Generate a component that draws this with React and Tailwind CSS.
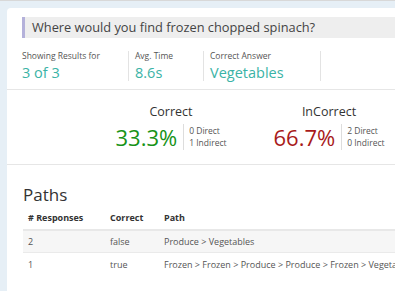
import React from "react";

const font = { fontFamily: '"Open Sans", "Noto Sans", sans-serif' };

function Stat({ label, value, w }) {
  return (
    <div className={`flex flex-col border-r border-[#e3e3e3] h-[30px] justify-between ${w}`}>
      <div className="text-[8.5px] leading-[10px] text-[#555] mt-[0px]">{label}</div>
      <div className="text-[14.5px] leading-[17px] text-[#3ab3a6]">{value}</div>
    </div>
  );
}

function Score({ title, pct, color, direct, indirect }) {
  return (
    <div className="w-[158px] flex flex-col items-center">
      <div className="text-[12.5px] leading-[16px] text-[#333]">{title}</div>
      <div className="flex items-center mt-[4px]">
        <div className={`text-[22px] leading-[26px] ${color} pr-[6px] border-r border-[#ddd] h-[26px] flex items-center`}>{pct}</div>
        <div className="pl-[5px] flex flex-col text-[8.5px] leading-[12px] text-[#555]">
          <div>{direct}</div>
          <div>{indirect}</div>
        </div>
      </div>
    </div>
  );
}

export default function App() {
  return (
    <div style={font} className="w-[395px] h-[291px] overflow-hidden bg-[#e6eff6] border-t border-[#d8d8d8]">
      <div className="ml-[7px] mt-[7px] w-[420px] h-[300px] bg-white rounded-tl-[4px]">
        <div className="pl-[15px] pt-[9px]">
          <div className="h-[21px] bg-[#eeeeee] border-l-[3px] border-[#b4b1da] pl-[7px] flex items-center text-[12.8px] text-[#444] whitespace-nowrap">
            Where would you find frozen chopped spinach?
          </div>
          <div className="flex mt-[13px] gap-[6px]">
            <Stat label="Showing Results for" value="3 of 3" w="w-[107px]" />
            <Stat label="Avg. Time" value="8.6s" w="w-[69px]" />
            <Stat label="Correct Answer" value="Vegetables" w="w-[111px]" />
          </div>
        </div>
        <div className="mt-[8px] border-t border-[#e6e6e6]" />
        <div className="flex pl-[85px] pt-[14px] h-[74px]">
          <Score title="Correct" pct="33.3%" color="text-[#179317]" direct="0 Direct" indirect="1 Indirect" />
          <Score title="InCorrect" pct="66.7%" color="text-[#a81a1a]" direct="2 Direct" indirect="0 Indirect" />
        </div>
        <div className="border-t border-[#e6e6e6]" />
        <div className="pl-[16px] pt-[20px]">
          <div className="text-[17px] leading-[20px] text-[#333]">Paths</div>
          <div className="mt-[1px] text-[9px] text-[#555]">
            <div className="flex h-[25px] items-center font-bold text-[#333] border-b-2 border-[#e8e8e8]">
              <div className="w-[87px] pl-[5px]">#&nbsp;Responses</div>
              <div className="w-[54px]">Correct</div>
              <div>Path</div>
            </div>
            <div className="flex h-[22px] items-center bg-[#f6f6f6] border-b border-[#eaeaea]">
              <div className="w-[87px] pl-[5px]">2</div>
              <div className="w-[54px]">false</div>
              <div className="whitespace-nowrap">Produce &gt; Vegetables</div>
            </div>
            <div className="flex h-[24px] items-center">
              <div className="w-[87px] pl-[5px]">1</div>
              <div className="w-[54px]">true</div>
              <div className="whitespace-nowrap">Frozen &gt; Frozen &gt; Produce &gt; Produce &gt; Frozen &gt; Vegetables</div>
            </div>
          </div>
        </div>
      </div>
    </div>
  );
}
